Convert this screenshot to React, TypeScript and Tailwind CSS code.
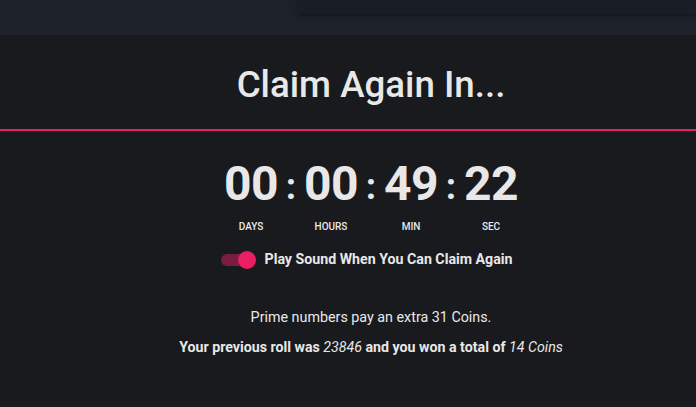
const UNITS = [
  { value: '00', label: 'DAYS' },
  { value: '00', label: 'HOURS' },
  { value: '49', label: 'MIN' },
  { value: '22', label: 'SEC' },
]

function Toggle() {
  return (
    <div className="relative h-[18px] w-[35px]">
      <div className="absolute left-0 right-[2px] top-[3px] h-[12px] rounded-full bg-[#7a1b40]" />
      <div className="absolute right-0 top-0 h-[18px] w-[18px] rounded-full bg-[#e91e63]" />
    </div>
  )
}

export default function App() {
  return (
    <div className="h-[407px] w-[696px] overflow-hidden bg-[#181a1e] font-['Roboto',sans-serif] text-[#e8e8e8]">
      <div className="h-[35px] bg-[#1d222a]">
        <div className="ml-[298px] h-[14px] bg-[#191d24] shadow-[0_2px_4px_rgba(0,0,0,0.35)]" />
      </div>

      <div className="flex h-[94px] items-center justify-center pl-[46px] pt-[6px]">
        <h1 className="text-[36.7px] font-medium leading-none">Claim Again In...</h1>
      </div>
      <div className="h-[2px] bg-[#e91e63]" />

      <div className="flex flex-col items-center pl-[46px]">
        <div className="mt-[29px] flex">
          {UNITS.map((u, i) => (
            <div key={u.label} className="flex">
              {i > 0 && (
                <div className="w-[20px] pt-[8px] text-center text-[37px] font-bold leading-none">:</div>
              )}
              <div className="flex w-[60px] flex-col items-center">
                <div className="text-[48px] font-bold leading-none tracking-[-0.5px]">{u.value}</div>
                <div className="mt-[14px] text-[10px] font-medium leading-none">{u.label}</div>
              </div>
            </div>
          ))}
        </div>

        <div className="mt-[17px] flex items-center gap-[8px] pr-[8px]">
          <Toggle />
          <span className="text-[14.2px] font-bold">Play Sound When You Can Claim Again</span>
        </div>

        <p className="mt-[40px] text-[14.3px] leading-none">Prime numbers pay an extra 31 Coins.</p>
        <p className="mt-[15px] text-[14.2px] font-bold leading-none">
          Your previous roll was <i className="font-normal">23846</i> and you won a total of{' '}
          <i className="font-normal">14 Coins</i>
        </p>
      </div>
    </div>
  )
}
